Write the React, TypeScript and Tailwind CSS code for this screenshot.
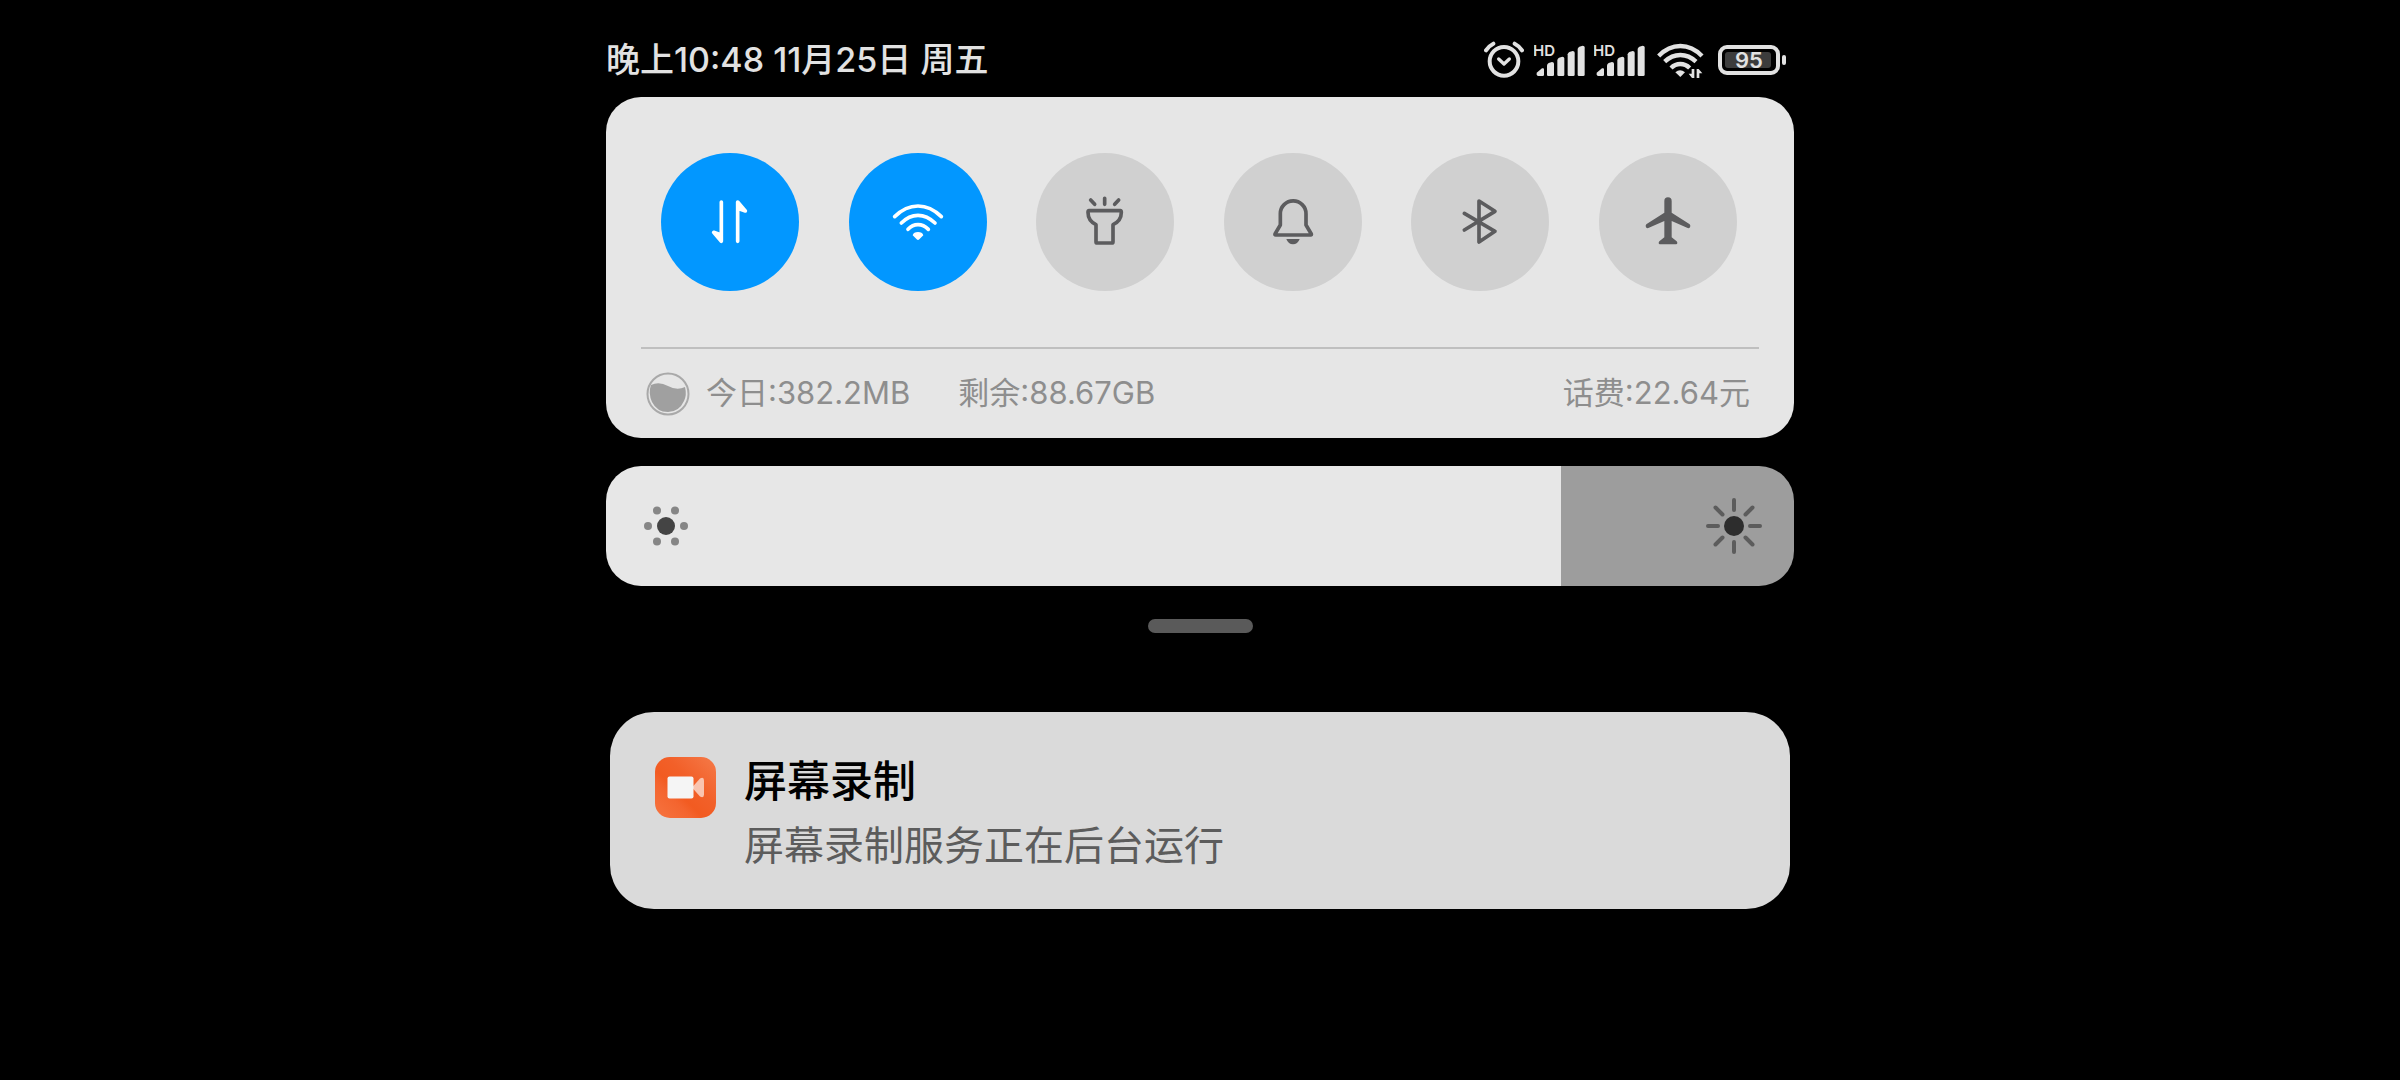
import React, { useState } from 'react';

interface IconProps {
  className?: string;
}

interface Toggle {
  id: string;
  label: string;
  icon: React.FC<IconProps>;
}

const AlarmIcon = () => (
  <svg viewBox="42 30 120 111" className="w-10 h-[37px]" fill="none" stroke="currentColor" strokeLinecap="round" strokeLinejoin="round">
    <circle cx="102" cy="91" r="43" strokeWidth="12" />
    <path d="M86 84l16 15 16-15" strokeWidth="10" />
    <path d="M48 58Q56 45 70 38M156 58Q148 45 134 38" strokeWidth="12" />
  </svg>
);

const SignalIcon = () => (
  <svg viewBox="192 30 153 111" className="w-[51px] h-[37px]" fill="currentColor">
    <text x="189" y="75" fontSize="45" fontWeight="600" fontFamily="Inter, sans-serif">HD</text>
    <path d="M200 125l16-13q6-2 6 3v16q0 4-4 4h-13q-5 0-5-5z" />
    <path d="M231 103q1-5 5-7l10-3q6 0 6 5v33q0 4-4 4h-13q-4 0-4-4z" />
    <path d="M262 87q1-5 5-7l10-3q6 0 6 5v49q0 4-4 4h-13q-4 0-4-4z" />
    <path d="M293 70q1-5 5-7l10-3q6 0 6 5v66q0 4-4 4h-13q-4 0-4-4z" />
    <path d="M323 54q1-5 5-7l10-3q6 0 6 5v82q0 4-4 4h-13q-4 0-4-4z" />
  </svg>
);

const WifiStatusIcon = () => (
  <svg viewBox="560 30 141 111" className="w-[47px] h-[37px]" fill="none" stroke="currentColor">
    <path d="M565 75Q594 45 630 45T695 75" strokeWidth="13" />
    <path d="M583 92Q604 72 630 72T677 92" strokeWidth="13" />
    <path d="M602 111Q614 99 630 99T658 111" strokeWidth="13" />
    <path d="M615 124q14-12 29 0l-14 14z" fill="currentColor" stroke="none" />
    <path d="M672 114v27h-7l-10-13h9v-14zM679 141v-27h6l11 13h-9v14z" fill="currentColor" stroke="none" />
  </svg>
);

const Battery = ({ level }: { level: number }) => (
  <div className="flex items-center gap-[2px]">
    <div className="relative w-[62px] h-[30px] p-[3px] border-4 border-[#e2e2e2] rounded-[9px]">
      <div className="h-full rounded-[3px] bg-[#3c3c3c]" style={{ width: `${level}%` }} />
      <span className="absolute inset-0 flex items-center justify-center text-[22px] leading-none font-semibold">{level}</span>
    </div>
    <div className="w-1 h-[10px] rounded-full bg-[#e2e2e2]" />
  </div>
);

// Tile glyphs share a 180 unit box, drawn at 60px
const DataIcon = ({ className }: IconProps) => (
  <svg viewBox="180 155 180 180" className={className} fill="currentColor" stroke="currentColor" strokeWidth="11" strokeLinecap="round" strokeLinejoin="round">
    <path d="M244 185v118l-23-27 23 8zM293 303v-118l23 27-23-8z" />
  </svg>
);

const WifiIcon = ({ className }: IconProps) => (
  <svg viewBox="741 155 180 180" className={className} fill="none" stroke="currentColor" strokeWidth="11" strokeLinecap="round">
    <path d="M761 229Q793 197 831 197T901 229" />
    <path d="M781 248Q804 225 831 225T882 248" />
    <path d="M801 267Q814 253 831 253T862 267" />
    <path d="M815 285q3-10 16-10t16 10l-12 12q-4 4-8 0z" fill="currentColor" stroke="none" />
  </svg>
);

const TorchIcon = ({ className }: IconProps) => (
  <svg viewBox="165 155 180 180" className={className} fill="none" stroke="currentColor" strokeWidth="11" strokeLinecap="round" strokeLinejoin="round">
    <path d="M207 211h94q3 0 3 5 0 26-25 37v51q0 4-4 4h-43q-4 0-4-4v-51q-24-11-24-37 0-5 3-5z" />
    <path d="M254 174v18M212 179l12 13M296 179l-12 13" />
  </svg>
);

const BellIcon = ({ className }: IconProps) => (
  <svg viewBox="727 155 180 180" className={className} fill="none" stroke="currentColor" strokeWidth="11" strokeLinejoin="round">
    <path d="M779 254v-34a38 38 0 0 1 77 0v34l16 27q1 3-2 3h-105q-3 0-2-3z" />
    <path d="M797 296h40q-6 16-20 16t-20-16z" fill="currentColor" stroke="none" />
  </svg>
);

const BluetoothIcon = ({ className }: IconProps) => (
  <svg viewBox="151 155 180 180" className={className} fill="none" stroke="currentColor" strokeWidth="11" strokeLinecap="round" strokeLinejoin="round">
    <path d="M194 219l92 54-48 32v-123l48 31-92 56" />
  </svg>
);

const PlaneIcon = ({ className }: IconProps) => (
  <svg viewBox="713 155 180 180" className={className} fill="currentColor">
    <path d="M792 182q0-11 11-11t11 11v35l53 34q3 2 3 6 0 8-8 6l-48-21v49l14 11q3 2 3 6 0 4-4 4h-48q-4 0-4-4 0-4 3-6l14-11v-49l-48 21q-8 2-8-6 0-4 3-6l53-34z" />
  </svg>
);

const DataUsageIcon = () => (
  <svg viewBox="0 0 44 44" className="w-11 h-11">
    <circle cx="22" cy="22" r="20.5" fill="none" stroke="#a9a9a9" strokeWidth="2" />
    <path d="M5 13q8-4 17 1t17 1q2 8-1 14-5 11-16 11T6 30Q2 21 5 13z" fill="#a0a0a0" />
  </svg>
);

const DimIcon = () => (
  <svg viewBox="0 0 44 44" className="w-11 h-11" fill="#868686">
    <circle cx="22" cy="22" r="9" fill="#444444" />
    <circle cx="4" cy="22" r="4" />
    <circle cx="40" cy="22" r="4" />
    <circle cx="13" cy="6.5" r="4" />
    <circle cx="31" cy="6.5" r="4" />
    <circle cx="13" cy="37.5" r="4" />
    <circle cx="31" cy="37.5" r="4" />
  </svg>
);

const BrightIcon = () => (
  <svg viewBox="0 0 56 56" className="w-14 h-14" stroke="#5c5c5c" strokeWidth="4" strokeLinecap="round">
    <path d="M28 2v10M28 44v10M2 28h10M44 28h10M9.5 9.5l7 7M39.5 39.5l7 7M9.5 46.5l7-7M39.5 16.5l7-7" />
    <circle cx="28" cy="28" r="10" fill="#2d2d2d" stroke="none" />
  </svg>
);

const RecorderIcon = () => (
  <svg viewBox="0 0 61 61" className="w-[61px] h-[61px] mt-[2px]">
    <defs>
      <linearGradient id="recorder" x1="0" y1="1" x2="1" y2="0">
        <stop offset="0" stopColor="#f67440" />
        <stop offset="0.3" stopColor="#f4652f" />
        <stop offset="0.4" stopColor="#f25b21" />
        <stop offset="0.6" stopColor="#f26029" />
        <stop offset="1" stopColor="#f57a49" />
      </linearGradient>
    </defs>
    <rect width="61" height="61" rx="15" fill="url(#recorder)" />
    <path d="M37 30.5l8-9q4-2 4 2v14q0 4-4 2z" fill="#f9c4b0" />
    <rect x="12.5" y="19.5" width="26" height="22" rx="2" fill="#f5f5f5" />
  </svg>
);

const TOGGLES: Toggle[] = [
  { id: 'data', label: '移动数据', icon: DataIcon },
  { id: 'wifi', label: 'WLAN', icon: WifiIcon },
  { id: 'torch', label: '手电筒', icon: TorchIcon },
  { id: 'mute', label: '静音', icon: BellIcon },
  { id: 'bluetooth', label: '蓝牙', icon: BluetoothIcon },
  { id: 'airplane', label: '飞行模式', icon: PlaneIcon },
];

const StatusBar = () => (
  <header className="flex items-center justify-between h-[75px] pr-2 text-[#e2e2e2]">
    <p className="text-[34px] leading-10 font-medium whitespace-nowrap">晚上10:48 11月25日 周五</p>
    <div className="flex items-center">
      <AlarmIcon />
      <div className="flex gap-[9px] ml-[10px] mr-3">
        <SignalIcon />
        <SignalIcon />
      </div>
      <WifiStatusIcon />
      <div className="ml-[14px]">
        <Battery level={95} />
      </div>
    </div>
  </header>
);

const QuickSettings = () => {
  const [active, setActive] = useState<string[]>(['data', 'wifi']);

  const toggle = (id: string) => {
    setActive(prev => (prev.includes(id) ? prev.filter(t => t !== id) : [...prev, id]));
  };

  return (
    <section className="bg-[#e6e6e6] rounded-[35px] px-[35px] pt-14">
      <div className="flex justify-between pl-5 pr-[22px]">
        {TOGGLES.map(({ id, label, icon: Icon }) => (
          <button
            key={id}
            aria-label={label}
            aria-pressed={active.includes(id)}
            onClick={() => toggle(id)}
            className={`flex items-center justify-center w-[138px] h-[138px] rounded-full ${
              active.includes(id) ? 'bg-[#0297ff] text-white' : 'bg-[#d0d0d0] text-[#5c5c5e]'
            }`}
          >
            <Icon className="w-[60px] h-[60px]" />
          </button>
        ))}
      </div>
      <div className="flex items-center mt-14 h-[91px] border-t-2 border-[#bfbfbf] px-[5px] text-[31px] text-[#8e8e8e] whitespace-nowrap">
        <DataUsageIcon />
        <span className="ml-4">今日:382.2MB</span>
        <span className="ml-12">剩余:88.67GB</span>
        <span className="ml-auto pr-1">话费:22.64元</span>
      </div>
    </section>
  );
};

const BrightnessSlider = () => {
  const [value, setValue] = useState(804);
  const percent = value / 10;

  return (
    <div className="relative mt-7 h-[120px]">
      <input
        type="range"
        aria-label="亮度"
        min={0}
        max={1000}
        value={value}
        onChange={(e) => setValue(Number(e.target.value))}
        className="block w-full h-full appearance-none rounded-[35px] cursor-pointer [&::-webkit-slider-thumb]:appearance-none [&::-webkit-slider-thumb]:w-0"
        style={{ background: `linear-gradient(to right, #e7e7e7 ${percent}%, #9d9d9d ${percent}%)` }}
      />
      <div className="absolute inset-0 flex items-center justify-between pl-[38px] pr-8 pointer-events-none">
        <DimIcon />
        <BrightIcon />
      </div>
    </div>
  );
};

const Notification = () => (
  <article className="flex gap-7 mx-1 px-[45px] pt-[43px] pb-[38px] rounded-[44px] bg-[#dadada]">
    <RecorderIcon />
    <div>
      <h2 className="text-[43px] leading-[52px] font-medium text-black">屏幕录制</h2>
      <p className="mt-[14px] text-[40px] leading-[50px] text-[#5c5c5c]">屏幕录制服务正在后台运行</p>
    </div>
  </article>
);

export default function App() {
  return (
    <main className="min-h-screen bg-black pt-[22px] font-['Inter','Noto_Sans_CJK_SC',sans-serif]">
      <div className="w-full max-w-[1188px] mx-auto">
        <StatusBar />
        <QuickSettings />
        <BrightnessSlider />
        <div className="w-[105px] h-[14px] mx-auto mt-[33px] mb-[79px] rounded-full bg-[#5a5a5a]" />
        <Notification />
      </div>
    </main>
  );
}
